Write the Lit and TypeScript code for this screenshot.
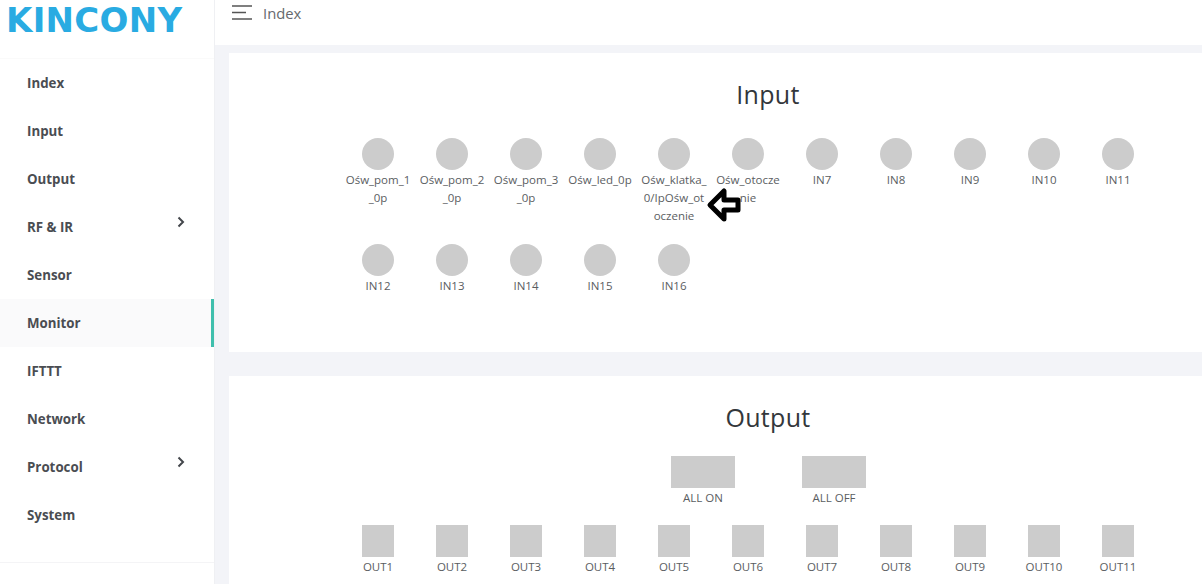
import { css, html, LitElement } from "lit";
import { customElement } from "lit/decorators.js";

const NAV = [
  { label: "Index" },
  { label: "Input" },
  { label: "Output" },
  { label: "RF & IR", sub: true },
  { label: "Sensor" },
  { label: "Monitor", active: true },
  { label: "IFTTT" },
  { label: "Network" },
  { label: "Protocol", sub: true },
  { label: "System" },
];

const INPUTS = [
  "Ośw_pom_1_0p",
  "Ośw_pom_2_0p",
  "Ośw_pom_3_0p",
  "Ośw_led_0p",
  "Ośw_klatka_0/IpOśw_otoczenie",
  "Ośw_otoczenie",
  "IN7",
  "IN8",
  "IN9",
  "IN10",
  "IN11",
  "IN12",
  "IN13",
  "IN14",
  "IN15",
  "IN16",
];

// only the first row fits in the window
const OUTPUTS = Array.from({ length: 11 }, (_, i) => `OUT${i + 1}`);

@customElement("app-root")
export class AppRoot extends LitElement {
  render() {
    return html`
      <aside class="sidebar">
        <div class="logo">KINCONY</div>
        <nav class="nav">
          ${NAV.map(
            (item) => html`
              <div class="nav-item ${item.active ? "active" : ""}">
                <span>${item.label}</span>
                ${item.sub
                  ? html`<svg class="chevron" width="8" height="12" viewBox="0 0 8 12">
                      <path d="M1.5 1.5 6 6 1.5 10.5" fill="none" stroke="#43464b" stroke-width="2" />
                    </svg>`
                  : ""}
              </div>
            `,
          )}
        </nav>
      </aside>
      <div class="main">
        <header class="topbar">
          <svg class="burger" width="20" height="15" viewBox="0 0 20 15">
            <path d="M0 1h20M0 7.5h14M0 14h20" fill="none" stroke="#555" stroke-width="1.6" />
          </svg>
          <span>Index</span>
        </header>
        <section class="card input-card">
          <h2>Input</h2>
          <div class="grid">
            ${INPUTS.map(
              (name) => html`
                <div class="cell">
                  <div class="dot"></div>
                  <div class="name">${name}</div>
                </div>
              `,
            )}
          </div>
        </section>
        <section class="card output-card">
          <h2>Output</h2>
          <div class="all-row">
            <div class="all"><div class="wide"></div><div class="name">ALL ON</div></div>
            <div class="all"><div class="wide"></div><div class="name">ALL OFF</div></div>
          </div>
          <div class="grid">
            ${OUTPUTS.map(
              (name) => html`
                <div class="cell">
                  <div class="square"></div>
                  <div class="name">${name}</div>
                </div>
              `,
            )}
          </div>
        </section>
      </div>
      <svg class="arrow" width="36" height="36" viewBox="0 0 36 36">
        <path d="M4 18 18 4v9h14v10H18v9z" fill="#fff" stroke="#000" stroke-width="5" stroke-linejoin="round" />
      </svg>
    `;
  }

  static styles = css`
    :host {
      display: flex;
      position: relative;
      width: 1202px;
      height: 584px;
      overflow: hidden;
      background: #f3f4f8;
      font-family: "Open Sans", "Noto Sans", sans-serif;
      color: #55585c;
    }

    .sidebar {
      flex: none;
      width: 214px;
      height: 584px;
      background: #fff;
      border-right: 1px solid #eff0f3;
    }

    .logo {
      height: 59px;
      padding-left: 6px;
      box-sizing: border-box;
      border-bottom: 1px solid #fafafa;
      font-family: "DejaVu Sans", sans-serif;
      font-weight: 700;
      font-size: 34px;
      line-height: 41px;
      letter-spacing: 0.3px;
      color: #29abe2;
    }

    .nav {
      height: 504px;
      box-sizing: border-box;
      border-bottom: 1px solid #f4f4f6;
    }

    .nav-item {
      position: relative;
      display: flex;
      align-items: center;
      height: 48px;
      padding-left: 27px;
      font-size: 13.3px;
      font-weight: 700;
      color: #4a4d52;
    }

    .nav-item.active {
      background: #fafafb;
      box-shadow: inset -3px 0 0 #3fbfad;
    }

    .chevron {
      position: absolute;
      left: 177px;
      top: 13px;
    }

    .main {
      flex: 1;
      min-width: 0;
    }

    .topbar {
      display: flex;
      align-items: flex-start;
      gap: 11px;
      height: 45px;
      padding: 5px 0 0 17px;
      box-sizing: border-box;
      background: #fff;
      font-size: 14.8px;
      line-height: 17px;
      color: #66696d;
    }

    .card {
      width: 1078px;
      margin-left: 14px;
      background: #fff;
      box-sizing: border-box;
      padding-left: 112px;
    }

    .input-card {
      height: 299px;
      margin-top: 8px;
      padding-top: 25px;
    }

    .output-card {
      margin-top: 24px;
      height: 300px;
      padding-top: 25px;
    }

    h2 {
      margin: 0 0 0 -112px;
      text-align: center;
      font-size: 25px;
      font-weight: 400;
      line-height: 33px;
      letter-spacing: 0.3px;
      color: #33373b;
    }

    .grid {
      display: grid;
      grid-template-columns: repeat(11, 74px);
      margin-top: 27px;
      grid-auto-rows: 106px;
    }

    .output-card .grid {
      margin-top: 18px;
    }

    .cell,
    .all {
      display: flex;
      flex-direction: column;
      align-items: center;
    }

    .dot,
    .square {
      width: 32px;
      height: 32px;
      background: #ccc;
    }

    .dot {
      border-radius: 50%;
    }

    .name {
      width: 66px;
      margin-top: 1px;
      text-align: center;
      font-size: 11.5px;
      line-height: 18px;
      overflow-wrap: anywhere;
      color: #5a5d61;
    }

    .all-row {
      display: flex;
      gap: 67px;
      margin-top: 22px;
      margin-left: 330px;
    }

    .all {
      width: 64px;
    }

    .wide {
      width: 64px;
      height: 32px;
      background: #ccc;
    }

    .arrow {
      position: absolute;
      left: 706px;
      top: 187px;
    }
  `;
}

declare global {
  interface HTMLElementTagNameMap {
    "app-root": AppRoot;
  }
}
